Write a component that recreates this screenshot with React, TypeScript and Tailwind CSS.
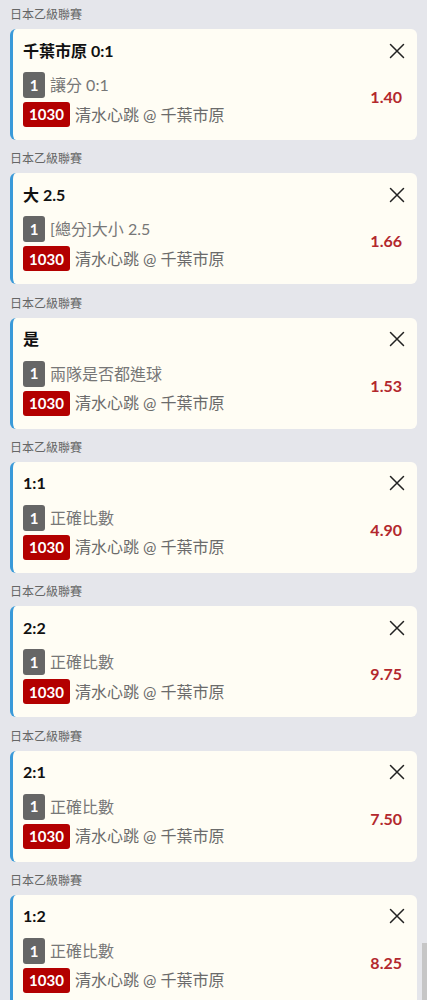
import React from "react";

const bets = [
  { title: "千葉市原 0:1", market: "讓分 0:1", odds: "1.40" },
  { title: "大 2.5", market: "[總分]大小 2.5", odds: "1.66" },
  { title: "是", market: "兩隊是否都進球", odds: "1.53" },
  { title: "1:1", market: "正確比數", odds: "4.90" },
  { title: "2:2", market: "正確比數", odds: "9.75" },
  { title: "2:1", market: "正確比數", odds: "7.50" },
  { title: "1:2", market: "正確比數", odds: "8.25" },
];

const font = {
  fontFamily: 'Lato, "Noto Sans CJK TC", "Noto Sans", sans-serif',
};

function Close() {
  return (
    <svg width="16" height="16" viewBox="0 0 16 16" fill="none">
      <path d="M1.5 1.5L14.5 14.5M14.5 1.5L1.5 14.5" stroke="#222" strokeWidth="1.5" strokeLinecap="round" />
    </svg>
  );
}

function Card({ title, market, odds }: { title: string; market: string; odds: string }) {
  return (
    <div className="h-[111px] mb-[4.33px] rounded-[6px] border-l-[3px] border-[#3a9ad9] bg-[#fffdf4] pl-[10px] pr-[15px] pt-[9px]">
      <div className="flex items-center justify-between h-[25px]">
        <div className="text-[16px] font-bold text-[#111] leading-[24px]">{title}</div>
        <div className="mr-[-3px]">
          <Close />
        </div>
      </div>
      <div className="flex items-center justify-between mt-[9px]">
        <div className="flex flex-col gap-[4px]">
          <div className="flex items-center h-[26px]">
            <div className="w-[22px] h-[26px] rounded-[3px] bg-[#666] text-white text-[15px] font-bold flex items-center justify-center">1</div>
            <div className="ml-[5px] text-[16px] text-[#777] leading-[24px]">{market}</div>
          </div>
          <div className="flex items-center h-[25px]">
            <div className="w-[47px] h-[25px] rounded-[3px] bg-[#b30000] text-white text-[15px] font-bold flex items-center justify-center">1030</div>
            <div className="ml-[5px] text-[16px] text-[#6b6b6b] leading-[24px]">清水心跳 @ 千葉市原</div>
          </div>
        </div>
        <div className="text-[16px] font-bold text-[#b3282d] mt-[-5px]">{odds}</div>
      </div>
    </div>
  );
}

export default function App() {
  return (
    <div className="min-h-[1000px] bg-[#e5e6eb] px-[10px] overflow-hidden relative" style={font}>
      {bets.map((b, i) => (
        <div key={i}>
          <div className="h-[29px] pt-[8px] text-[12px] leading-[14px] text-[#666]">日本乙級聯賽</div>
          <Card {...b} />
        </div>
      ))}
      <div className="fixed right-0 top-[943px] w-[5px] h-[57px] bg-[#c6c6c6]" />
    </div>
  );
}
